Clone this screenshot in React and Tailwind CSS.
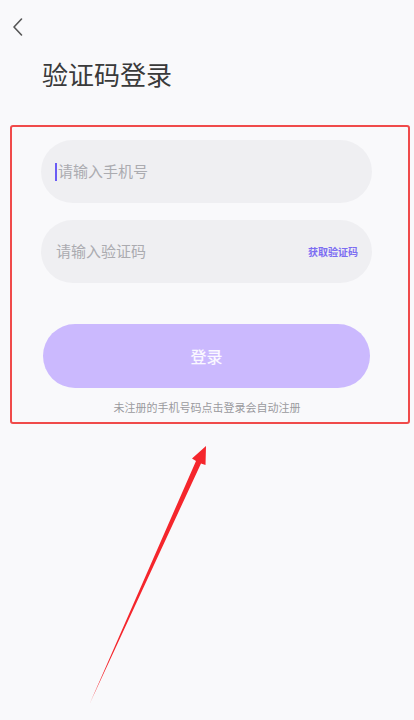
import React from "react";

export default function App() {
  return (
    <div
      className="relative w-[414px] h-[720px] bg-[#f9f9fb] overflow-hidden"
      style={{ fontFamily: '"Noto Sans CJK SC", "Noto Sans", sans-serif' }}
    >
      <div className="pt-[17px] pl-[11px] h-[40px]">
        <svg width="14" height="20" viewBox="0 0 14 20" fill="none">
          <path d="M10.5 2 L3 10 L10.5 18" stroke="#555" strokeWidth="1.6" strokeLinecap="round" strokeLinejoin="round" />
        </svg>
      </div>
      <h1 className="ml-[42px] mt-[16px] text-[26px] leading-[36px] text-[#3a3a3a] font-normal">验证码登录</h1>
      <div className="mt-[33px] ml-[10px] mr-[4px] h-[299px] border-2 border-[#f04a4a] rounded-[3px] pt-[13px]">
        <div className="ml-[29px] w-[331px] h-[63px] rounded-full bg-[#efeff2] flex items-center pl-[14px]">
          <span className="w-[2px] h-[18px] bg-[#6a5cf5] mr-[1px]"></span>
          <span className="text-[15px] text-[#ababb0]">请输入手机号</span>
        </div>
        <div className="mt-[17px] ml-[29px] w-[331px] h-[63px] rounded-full bg-[#efeff2] flex items-center pl-[15px] pr-[14px] justify-between">
          <span className="text-[15px] text-[#ababb0]">请输入验证码</span>
          <span className="text-[10px] font-bold text-[#7c6df2]">获取验证码</span>
        </div>
        <div className="mt-[41px] ml-[31px] w-[327px] h-[64px] rounded-full bg-[#cbb9fe] flex items-center justify-center">
          <span className="text-[16px] text-white/90 font-medium">登录</span>
        </div>
        <div className="mt-[11px] ml-[-6px] text-center text-[11px] leading-[16px] text-[#9a9a9e]">未注册的手机号码点击登录会自动注册</div>
      </div>
      <svg className="absolute left-0 top-0 pointer-events-none" width="414" height="720" viewBox="0 0 414 720">
        <polygon
          points="206,446 205.5,465 201,463.5 90,703 196,461 192,458.5"
          fill="#f5262c"
        />
      </svg>
    </div>
  );
}
